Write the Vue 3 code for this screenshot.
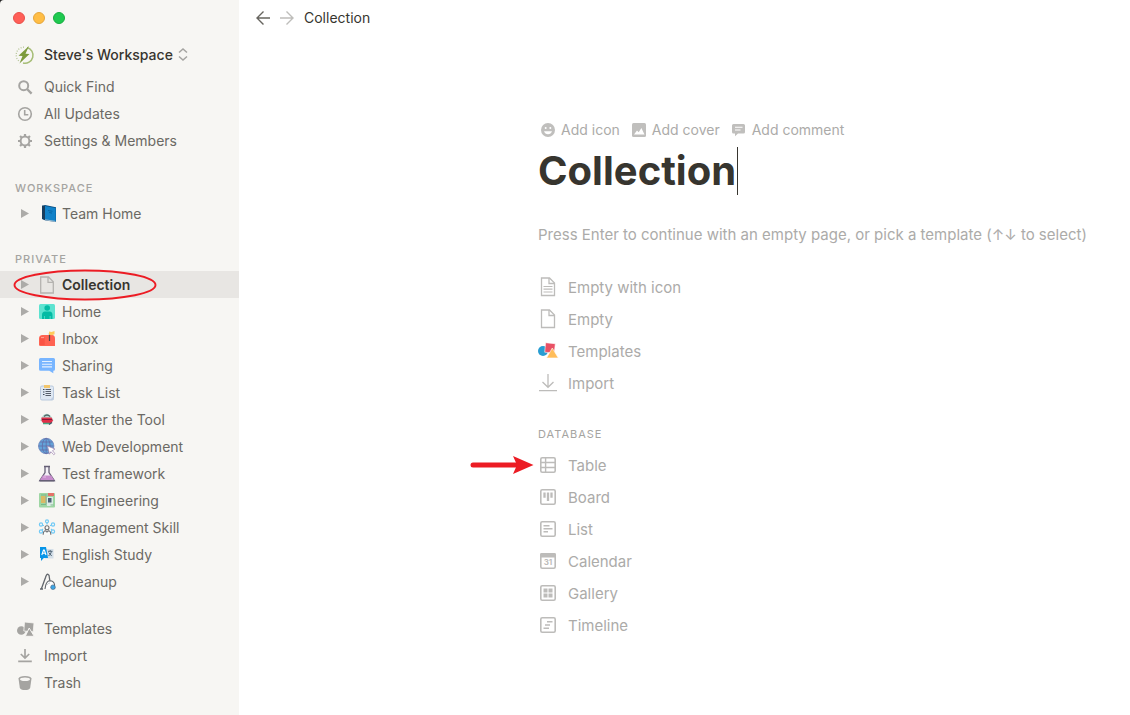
<script setup>
import { ref } from 'vue'

const docOutline = '<path d="M3.5 1h8l5 5v12.5h-13z" fill="none" stroke="#bdbcba" stroke-width="1.3"/><path d="M11 1v5.5h5.5" fill="none" stroke="#bdbcba" stroke-width="1.3"/>'
const frame = '<rect x="2.8" y="2.8" width="14.4" height="14.4" rx="1.4" fill="none" stroke="#bdbcba" stroke-width="1.6"/>'

const menuTop = [
  { label: 'Quick Find', icon: '<g fill="none" stroke="#a5a4a1"><circle cx="7.7" cy="7.7" r="4.5" stroke-width="2"/><path d="M11 11l4.6 4.6" stroke-width="2.4"/></g>' },
  { label: 'All Updates', icon: '<g fill="none" stroke="#a5a4a1" stroke-width="1.6"><circle cx="9" cy="9" r="6.3"/><path d="M8.7 5v4.7h3.6"/></g>' },
  { label: 'Settings & Members', icon: '<g fill="none" stroke="#a5a4a1"><circle cx="9" cy="9" r="4.4" stroke-width="2"/><path d="M9 2v2.4M9 13.6V16M2 9h2.4M13.6 9H16M4.05 4.05l1.7 1.7M12.25 12.25l1.7 1.7M13.95 4.05l-1.7 1.7M5.75 12.25l-1.7 1.7" stroke-width="2.2"/></g>' }
]

const workspacePages = [
  { label: 'Team Home', icon: '<path d="M4 .8 7 0l11 2.3v14.8L7.500 15.500 4 14z" fill="#0b4f82"/><path d="M7 1l10.700 2v13.500L7 14.600z" fill="#1182c9"/><path d="M4 .8 7 1v13.700L4 13.800z" fill="#173d5d"/><path d="M7 14.800l10.500 1.600" stroke="#c6d5df" stroke-width=".8"/><path d="M10 5.500l4.500.8M11 7.500l3 .6" stroke="#0867a6" stroke-width="1"/>' }
]

const privatePages = [
  { label: 'Collection', active: true, icon: '<path d="M2.700 1h7.800l4.800 4.800V17H2.700zM10 1v5.300h5.300" fill="none" stroke="#b5b3b0" stroke-width="1.300"/>' },
  { label: 'Home', icon: '<rect x="1" y="1" width="16" height="15" rx="1.500" fill="#5de3d0"/><circle cx="9.200" cy="5" r="2.800" fill="#04bba4"/><path d="M4 16v-4q0-3.500 3-3.500h4.500q3 0 3 3.500v4h-2v-3h-.8v3h-5v-3H6v3z" fill="#04bba4"/>' },
  { label: 'Inbox', icon: '<path d="M1 8.500Q1 5 4.500 5H14q3 0 3 3.500V16H2.500Q1 16 1 14.500z" fill="#ff6352"/><path d="M2 8.500Q2 6 4.300 6t2.400 2.500V15H2z" fill="#fa5344"/><path d="M3 7.500h3" stroke="#ff9b8b" stroke-width="1.300"/><path d="M11.500 11V3" stroke="#50434d" stroke-width="1.200"/><path d="M11 1.500l2.500.5 3-1v3.300l-3 .9-2.500-.5z" fill="#ffcb5c"/>' },
  { label: 'Sharing', icon: '<path d="M2.500 1h13Q17 1 17 2.500v9.700q0 1.500-1.500 1.500H15.300v2.500l-4-2.500H2.500Q1 13.700 1 12.200V2.500Q1 1 2.500 1z" fill="#78b5ff"/><path d="M4 4.500h10M4 7.200h10M4 9.900h10" stroke="#e3f0ff" stroke-width="1.100"/>' },
  { label: 'Task List', icon: '<rect x="2.500" y="2" width="13" height="14" rx="1.500" fill="#dfe8f3" stroke="#b9c9dd"/><path d="M6 1h6v3H6z" fill="#f3c66c"/><path d="M5 5.500h1.500M5 8h1.500M5 10.500h1.500" stroke="#3e4859" stroke-width="1.200"/><path d="M7.500 5.500h5.500M7.500 7.500h5.500M7.500 9.500h5.500M7.500 11.500h5.500" stroke="#59606c" stroke-width="1.100"/><path d="M12 16l3.500-3.500V16z" fill="#bccbe0"/>' },
  { label: 'Master the Tool', icon: '<path d="M2 10q1-4 4-6.500 3-1.500 5 0 4 3 4.500 6.500z" fill="#b9dfd5"/><path d="M6 5.500q3-3 6 0" fill="none" stroke="#506466" stroke-width="1.300"/><path d="M3.500 6.500h10l1.500 3-1.500 2.500H5l-1.500-2z" fill="#e02f48"/><path d="M4 8.500h10" stroke="#8b1738"/><path d="M5 12.500h7" stroke="#45a982" stroke-width="1.500"/><path d="M11 13.500l3-2" stroke="#3e5966" stroke-width="1.400"/>' },
  { label: 'Web Development', icon: '<circle cx="8.200" cy="8" r="7.700" fill="#63a3d9" stroke="#7186bd" stroke-width=".8"/><g fill="none" stroke="#6465a0" stroke-width=".7"><path d="M.5 8h15M8.200.4v15M2 4h12.500M2 12h10"/><ellipse cx="8.200" cy="8" rx="3.900" ry="7.600"/></g><path d="M9.500 8l7.500 3-2.500 1.700 2.500 3-1.300 1-2.800-3-1.400 2.500z" fill="#fff" stroke="#9c82ac" stroke-width=".7"/>' },
  { label: 'Test framework', icon: '<path d="M7 2v5.500L1.800 15.500h14.500L11 7.500V2" fill="#f4f0f7" stroke="#655f75" stroke-width="1.300"/><path d="M4.800 10.500h8.500l3 5H1.800z" fill="#c78ccc"/><path d="M6 1.500h6M1.500 15.700h15" stroke="#655f75" stroke-width="1.400"/><path d="M5 12h3" stroke="#e5bce7"/>' },
  { label: 'IC Engineering', icon: '<rect x="1" y="1" width="16" height="14.500" rx="1" fill="#9ed6a3"/><path d="M3 4h5v7H3z" fill="#d9ba66"/><path d="M10 1h6v3h-6z" fill="#e47169"/><path d="M9 5h6v9H9z" fill="#dcebe6"/><path d="M10 6h3.500v4.500H10z" fill="#4d6074"/><path d="M3 12.500h5M3 3h5M12.500 13h3" stroke="#7ab888" stroke-width="1.200"/><path d="M8 2v10" stroke="#8fae9c"/>' },
  { label: 'Management Skill', icon: '<g fill="none" stroke="#70c9f5" stroke-width="1.200"><circle cx="9" cy="2.300" r="1.500"/><circle cx="3" cy="5.500" r="1.600"/><circle cx="15" cy="5.500" r="1.600"/><circle cx="3" cy="12.500" r="1.600"/><circle cx="15" cy="12.500" r="1.600"/><path d="M9 4v1.500M4.500 6.500H6M13.500 6.500H12M4 11l1-1M14 11l-1-1"/></g><g fill="#fafaf8" stroke="#6e7074" stroke-width="1.100"><circle cx="9" cy="8.700" r="2"/><path d="M5.200 15.800q0-4 2.400-4l1.400 1.300 1.400-1.300q2.400 0 2.400 4"/></g>' },
  { label: 'English Study', icon: '<path d="M7 3h8.500v9.500H7z" fill="#d4dfe8"/><path d="M2 1h6l2 11H5.800L3 15v-3H2z" fill="#0795e8"/><path d="M3.800 9 5.500 4h.8L8 9M4.400 7.300h3" fill="none" stroke="#fff" stroke-width="1.100"/><path d="M10 5.300h4.500M12.200 4v1.300M13.500 5.500q-.8 3-3 4.500M10.700 6.500l3 3.500" stroke="#536778" stroke-width="1" fill="none"/>' },
  { label: 'Cleanup', icon: '<path d="M2 16h3M3.500 15.500l4-11Q8.500.8 10 1.300t1.300 3l.7 4" fill="none" stroke="#62666c" stroke-width="1.300"/><path d="M7 16l.8-4Q9 8 12 7.800q4 .2 4.500 3.700V16" fill="#fff" stroke="#62666c" stroke-width="1.100"/><path d="M9 12q1-2 3-2" stroke="#c6cdd2" fill="none"/><circle cx="15" cy="14.200" r="2.300" fill="#3ba5e6" stroke="#506e89" stroke-width=".7"/>' }
]

const menuBottom = [
  { label: 'Templates', icon: '<g fill="#a5a4a1"><circle cx="5.300" cy="10.500" r="4.300"/><path d="M8.500 2l9.500 1-.8 8.800L7.800 11z" stroke="#f7f6f3" stroke-width=".8"/><path d="M13.200 8l5 8.300H9.300z" stroke="#f7f6f3"/></g>' },
  { label: 'Import', icon: '<path d="M9 2v8.500M4.800 7 9 11l4.200-4M2.200 14.300h13.600" fill="none" stroke="#a5a4a1" stroke-width="1.700"/>' },
  { label: 'Trash', icon: '<path d="M2.500 4.500Q3 2 9 2t6.500 2.500l-1.300 9.200Q13.500 16 9 16t-5.200-2.300z" fill="#a5a4a1"/><ellipse cx="9" cy="5.200" rx="5" ry="1.800" fill="#f7f6f3"/>' }
]

const pageActions = [
  { label: 'Add icon', icon: '<circle cx="8" cy="8" r="7" fill="#c0bfbd"/><g fill="#fff"><circle cx="5.700" cy="6" r="1"/><circle cx="10.300" cy="6" r="1"/><path d="M4 9.200h8q-1 3-4 3t-4-3z"/></g>' },
  { label: 'Add cover', icon: '<rect x="1" y="1" width="14" height="14" rx="1.500" fill="#c0bfbd"/><path d="M3 12.500l3-4 1.700 1.800L10.400 6l3.100 6.500z" fill="#fff"/>' },
  { label: 'Add comment', icon: '<path d="M2.500 2h10q1.500 0 1.500 1.500V10q0 1.500-1.500 1.500H7L4 14.200v-2.700H2.500Q1 11.500 1 10V3.500Q1 2 2.500 2z" fill="#c0bfbd"/><path d="M4 5.200h7.500M4 8h5.500" stroke="#fff" stroke-width="1.100"/>' }
]

const starters = [
  { label: 'Empty with icon', icon: docOutline + '<path d="M5.500 9.500h9M5.500 12.200h9M5.500 15h9" stroke="#bdbcba" stroke-width="1.200"/>' },
  { label: 'Empty', icon: docOutline },
  { label: 'Templates', icon: '<circle cx="5" cy="10" r="5" fill="#289dd2"/><path d="M7.600 1.700l9.700 1-1 9.500-9.600-1z" fill="#e95165" stroke="#fff" stroke-width=".6"/><path d="M14.300 7l6 10H8.500z" fill="#ffbd5a" stroke="#fff" stroke-width=".6"/>' },
  { label: 'Import', icon: '<path d="M10 1v13M4.500 9l5.500 5.300L15.500 9M1 17.700h18" fill="none" stroke="#bdbcba" stroke-width="1.300"/>' }
]

const databases = [
  { label: 'Table', pointed: true, icon: frame + '<path d="M7.600 2.500v15M2.500 7.500h15M2.500 12.500h15" stroke="#bdbcba" stroke-width="1.400"/>' },
  { label: 'Board', icon: frame + '<path d="M6.500 5.500v5.300M10 5.500v8.500M13.500 5.500v5.300" stroke="#bdbcba" stroke-width="2.300"/>' },
  { label: 'List', icon: frame + '<path d="M5.500 6.700h6M5.500 9.700h9M5.500 12.700h4.500" stroke="#bdbcba" stroke-width="1.500"/>' },
  { label: 'Calendar', icon: frame + '<path d="M2 3.500Q2 2 3.500 2h13Q18 2 18 3.500v3H2z" fill="#bdbcba"/><text x="10" y="14" text-anchor="middle" font-size="8" font-weight="700" font-family="Inter, sans-serif" fill="#bdbcba">31</text>' },
  { label: 'Gallery', icon: frame + '<path d="M5.500 5.500h4v4h-4zM10.500 5.500h4v4h-4zM5.500 10.500h4v4h-4zM10.500 10.500h4v4h-4z" fill="#bdbcba"/>' },
  { label: 'Timeline', icon: frame + '<path d="M9 6.700h5.500M7 10h5M5.500 13.300h5.500" stroke="#bdbcba" stroke-width="1.500"/>' }
]

const title = ref('Collection')
</script>

<template>
  <div class="window">
    <aside class="sidebar">
      <div class="lights">
        <button class="light close" aria-label="Close"></button>
        <button class="light minimize" aria-label="Minimize"></button>
        <button class="light expand" aria-label="Zoom"></button>
      </div>

      <button class="switcher">
        <svg class="logo" viewBox="1 0 18 18" aria-hidden="true">
          <path d="M12 1.500A8 8 0 0 1 8 17" fill="none" stroke="#a6bd76" stroke-width="1.500" />
          <path d="M9 1.200A7.800 7.800 0 0 0 4 15" fill="none" stroke="#b6c597" stroke-width="1.300" stroke-dasharray="1 1.500" />
          <path d="M14 0 3.500 9.800l4 .2L4.500 17.500 14.500 8l-4-.3z" fill="#7d9b3d" />
        </svg>
        <span>Steve's Workspace</span>
        <svg class="updown" viewBox="0 0 10 13" aria-hidden="true">
          <path d="M1 4.500 5 1l4 3.500M1 8.500 5 12l4-3.500" fill="none" stroke="#a5a4a1" stroke-width="1.500" />
        </svg>
      </button>

      <nav>
        <button v-for="item in menuTop" :key="item.label" class="row menu">
          <svg class="icon" viewBox="0 0 18 17" aria-hidden="true" v-html="item.icon"></svg>
          <span>{{ item.label }}</span>
        </button>
      </nav>

      <section class="group first">
        <h2 class="caption">WORKSPACE</h2>
        <a v-for="page in workspacePages" :key="page.label" href="#" class="row page">
          <svg class="toggle" viewBox="0 0 8 9" aria-hidden="true"><path d="M0 0l8 4.500L0 9z" fill="#acaba8" /></svg>
          <svg class="icon" viewBox="0 0 18 17" aria-hidden="true" v-html="page.icon"></svg>
          <span>{{ page.label }}</span>
        </a>
      </section>

      <section class="group">
        <h2 class="caption">PRIVATE</h2>
        <a v-for="page in privatePages" :key="page.label" href="#" class="row page" :class="{ active: page.active }">
          <svg class="toggle" viewBox="0 0 8 9" aria-hidden="true"><path d="M0 0l8 4.500L0 9z" fill="#acaba8" /></svg>
          <svg class="icon" viewBox="0 0 18 17" aria-hidden="true" v-html="page.icon"></svg>
          <span>{{ page.label }}</span>
          <svg v-if="page.active" class="ring" viewBox="0 0 144 32" aria-hidden="true">
            <ellipse cx="72" cy="16" rx="70.500" ry="14.500" fill="none" stroke="#ec1c24" stroke-width="1.900" />
          </svg>
        </a>
      </section>

      <nav class="group">
        <button v-for="item in menuBottom" :key="item.label" class="row menu">
          <svg class="icon" viewBox="0 0 18 17" aria-hidden="true" v-html="item.icon"></svg>
          <span>{{ item.label }}</span>
        </button>
      </nav>
    </aside>

    <main class="main">
      <header class="topbar">
        <button class="arrow" aria-label="Back">
          <svg viewBox="0 0 14 14" aria-hidden="true"><path d="M14 7H1M7.500.5 1 7l6.500 6.500" fill="none" stroke="#67655f" stroke-width="1.400" /></svg>
        </button>
        <button class="arrow" aria-label="Forward">
          <svg viewBox="0 0 14 14" aria-hidden="true"><path d="M0 7h13M6.500.5 13 7l-6.500 6.500" fill="none" stroke="#bebdba" stroke-width="1.400" /></svg>
        </button>
        <a href="#" class="crumb">{{ title }}</a>
      </header>

      <article class="document">
        <div class="actions">
          <button v-for="action in pageActions" :key="action.label" class="action">
            <svg viewBox="0 0 16 16" aria-hidden="true" v-html="action.icon"></svg>
            <span>{{ action.label }}</span>
          </button>
        </div>
        <h1 class="title"><span>{{ title }}</span><i class="cursor"></i></h1>
        <p class="hint">Press Enter to continue with an empty page, or pick a template (↑↓ to select)</p>

        <div class="choices">
          <button v-for="item in starters" :key="item.label" class="choice">
            <svg class="glyph" viewBox="0 0 20 20" aria-hidden="true" v-html="item.icon"></svg>
            <span>{{ item.label }}</span>
          </button>
        </div>

        <h2 class="caption database">DATABASE</h2>
        <div class="choices">
          <button v-for="item in databases" :key="item.label" class="choice">
            <svg v-if="item.pointed" class="pointer" viewBox="0 0 64 20" aria-hidden="true">
              <path d="M3 10h44" stroke="#ec1c24" stroke-width="5" stroke-linecap="round" />
              <path d="M43 1l20.500 9L43 19l4-9z" fill="#ec1c24" />
            </svg>
            <svg class="glyph" viewBox="0 0 20 20" aria-hidden="true" v-html="item.icon"></svg>
            <span>{{ item.label }}</span>
          </button>
        </div>
      </article>
    </main>
  </div>
</template>

<style>
body {
  background: #fff;
}
</style>

<style scoped>
.window {
  display: flex;
  min-height: 100vh;
  background: #222;
  font-family: Inter, "Liberation Sans", sans-serif;
  font-size: 14px;
  color: #37352f;
}
button {
  margin: 0;
  padding: 0;
  border: 0;
  background: none;
  font: inherit;
  color: inherit;
  text-align: left;
}
a {
  color: inherit;
  text-decoration: none;
}
svg {
  display: block;
  flex: none;
  overflow: visible;
}
h1, h2, p {
  margin: 0;
}
.sidebar {
  box-sizing: border-box;
  flex: none;
  width: 239px;
  padding-bottom: 16px;
  background: #f7f6f3;
  border-top-left-radius: 4px;
}
.lights {
  display: flex;
  align-items: center;
  gap: 8px;
  height: 36px;
  padding-left: 13px;
}
.light {
  box-sizing: border-box;
  width: 12px;
  height: 12px;
  border: 1px solid;
  border-radius: 50%;
}
.close {
  background: #ff5f57;
  border-color: #e8504a;
}
.minimize {
  background: #ffbd44;
  border-color: #e5a63c;
}
.expand {
  background: #1fc94f;
  border-color: #15ad3f;
}
.switcher {
  display: flex;
  align-items: center;
  width: 100%;
  height: 37px;
  padding-left: 16px;
  font-weight: 500;
}
.logo {
  width: 18px;
  height: 18px;
  margin-right: 10px;
}
.updown {
  width: 10px;
  height: 13px;
  margin-left: 5px;
}
.row {
  display: flex;
  align-items: center;
  position: relative;
  width: 100%;
  height: 27px;
  color: #6b6964;
  white-space: nowrap;
}
.icon {
  width: 18px;
  height: 17px;
}
.menu {
  gap: 10px;
  padding-left: 16px;
}
.page {
  box-sizing: border-box;
  gap: 6px;
  padding-left: 21px;
}
.toggle {
  width: 8px;
  height: 9px;
  margin-right: 3px;
}
.active {
  background: #e8e6e3;
  color: #37352f;
  font-weight: 600;
}
.ring {
  position: absolute;
  left: 13px;
  top: -2px;
  width: 144px;
  height: 32px;
}
.group {
  margin-top: 20px;
}
.first {
  margin-top: 22px;
}
.caption {
  padding-left: 15px;
  font-size: 11px;
  font-weight: 500;
  line-height: 24px;
  letter-spacing: 1px;
  color: #a5a4a1;
}
.main {
  flex: 1;
  min-width: 0;
  background: #fff;
}
.topbar {
  display: flex;
  align-items: center;
  gap: 10px;
  height: 36px;
  padding-left: 17px;
  line-height: 18px;
}
.arrow svg {
  width: 14px;
  height: 14px;
}
.document {
  padding: 80px 0 40px 299px;
  color: #acaba9;
}
.actions {
  display: flex;
  gap: 11px;
  height: 28px;
  padding-left: 2px;
  line-height: 18px;
}
.action {
  display: flex;
  align-items: center;
  gap: 5px;
}
.action svg {
  width: 16px;
  height: 16px;
}
.title {
  display: flex;
  margin-top: 3px;
  font-size: 40px;
  font-weight: 700;
  line-height: 48px;
  color: #37352f;
}
.cursor {
  width: 1px;
  margin-left: 1px;
  background: #37352f;
}
.hint {
  margin: 28px 0 24px;
  font-size: 15px;
  line-height: 24px;
  white-space: nowrap;
}
.choice {
  display: flex;
  align-items: center;
  gap: 10px;
  position: relative;
  height: 32px;
  font-size: 15px;
}
.glyph {
  width: 20px;
  height: 20px;
}
.database {
  margin: 23px 0 3px;
  padding-left: 0;
  font-weight: 400;
}
.pointer {
  position: absolute;
  left: -68px;
  top: 6px;
  width: 64px;
  height: 20px;
}
</style>
